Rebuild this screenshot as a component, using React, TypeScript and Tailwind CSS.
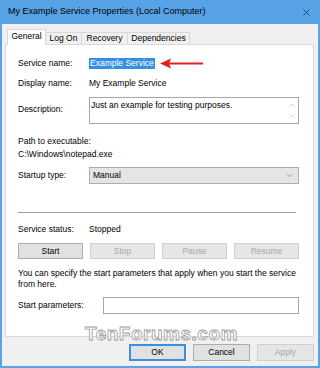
import { ChevronDown, ChevronUp, X } from "lucide-react";

const font = { fontFamily: '"Liberation Sans", Arial, sans-serif' };

function Btn({ label, disabled, wide }: { label: string; disabled?: boolean; wide?: boolean }) {
  return (
    <div
      className={`h-[16px] ${wide ? "w-[65px]" : "w-[57px]"} flex items-center justify-center border ${
        disabled ? "border-[#d0d0d0] bg-[#e6e6e6] text-[#a8a8a8]" : "border-[#adadad] bg-[#e1e1e1] text-black"
      }`}
    >
      {label}
    </div>
  );
}

export default function App() {
  return (
    <div
      className="relative w-[320px] h-[368px] bg-[#58a2e6] px-[2px] pb-[2px] flex flex-col text-[8.5px] text-black"
      style={font}
    >
      {/* title bar */}
      <div className="h-[24px] flex items-center justify-between pl-[6px] pr-[6px] text-[9px]">
        <span>My Example Service Properties (Local Computer)</span>
        <X size={11} strokeWidth={1.2} />
      </div>

      <div className="flex-1 bg-[#f0f0f0] flex flex-col pl-[3px]">
        {/* tabs */}
        <div className="flex items-end h-[20px] pl-[2px]">
          <div className="h-[16px] w-[39px] bg-white border border-b-0 border-[#d9d9d9] flex items-center justify-center relative top-[1px] z-10 pb-[2px]">
            General
          </div>
          <div className="h-[12px] w-[36px] border border-b-0 border-l-0 border-[#d9d9d9] flex items-center justify-center">
            Log On
          </div>
          <div className="h-[12px] w-[46px] border border-b-0 border-l-0 border-[#d9d9d9] flex items-center justify-center">
            Recovery
          </div>
          <div className="h-[12px] w-[62px] border border-b-0 border-l-0 border-[#d9d9d9] flex items-center justify-center">
            Dependencies
          </div>
        </div>

        {/* panel */}
        <div className="w-[309px] h-[293px] bg-white border border-[#d9d9d9] pl-[12px] pr-[14px] flex flex-col">
          <div className="mt-[12px] h-[13px] flex items-center">
            <span className="w-[71px]">Service name:</span>
            <span className="bg-[#3390e2] text-white h-[11px] px-[1px] flex items-center">Example Service</span>
            <svg width="44" height="11" viewBox="0 0 44 11" className="ml-[5px]">
              <path d="M9 4.5 H43 V6.5 H9 Z" fill="#e02020" />
              <path d="M0 5.5 L11 0.5 L9 5.5 L11 10.5 Z" fill="#e02020" />
            </svg>
          </div>

          <div className="mt-[7px] h-[13px] flex items-center">
            <span className="w-[71px]">Display name:</span>
            <span>My Example Service</span>
          </div>

          <div className="mt-[7px] flex">
            <span className="w-[71px] pt-[6px]">Description:</span>
            <div className="w-[210px] h-[27px] border border-[#a8a8a8] flex justify-between">
              <span className="pl-[1px] pt-[1px]">Just an example for testing purposes.</span>
              <div className="flex flex-col items-center justify-between py-[3px] pr-[2px] text-[#b0b0b0]">
                <ChevronUp size={8} strokeWidth={1.5} />
                <ChevronDown size={8} strokeWidth={1.5} />
              </div>
            </div>
          </div>

          <div className="mt-[11px] h-[13px] flex items-center">Path to executable:</div>
          <div className="h-[13px] flex items-center">C:\Windows\notepad.exe</div>

          <div className="mt-[6px] flex items-center">
            <span className="w-[71px]">Startup type:</span>
            <div className="w-[210px] h-[17px] border border-[#adadad] bg-[#e5e5e5] flex items-center justify-between pl-[3px] pr-[4px]">
              <span>Manual</span>
              <ChevronDown size={9} strokeWidth={1.3} className="text-[#444]" />
            </div>
          </div>

          <div className="mt-[28px] h-px bg-[#a0a0a0] w-[278px]" />

          <div className="mt-[10px] h-[13px] flex items-center">
            <span className="w-[71px]">Service status:</span>
            <span>Stopped</span>
          </div>

          <div className="mt-[7px] flex gap-[7px]">
            <Btn label="Start" wide />
            <Btn label="Stop" wide disabled />
            <Btn label="Pause" wide disabled />
            <Btn label="Resume" wide disabled />
          </div>

          <p className="mt-[9px] leading-[10.5px] w-[280px]">
            You can specify the start parameters that apply when you start the service from here.
          </p>

          <div className="mt-[8px] flex items-center">
            <span className="w-[85px]">Start parameters:</span>
            <div className="w-[196px] h-[17px] border border-[#a8a8a8]" />
          </div>
        </div>

        {/* dialog buttons */}
        <div className="mt-[7px] w-[309px] flex justify-end gap-[7px]">
          <div className="h-[17px] w-[57px] flex items-center justify-center border-2 border-[#3c8fd8] bg-[#e1e1e1]">OK</div>
          <div className="h-[17px] w-[57px] flex items-center justify-center border border-[#adadad] bg-[#e1e1e1]">Cancel</div>
          <div className="h-[17px] w-[57px] flex items-center justify-center border border-[#d0d0d0] bg-[#e6e6e6] text-[#a8a8a8]">Apply</div>
        </div>
      </div>

      {/* watermark */}
      <div className="absolute left-[85px] top-[320px] text-[19px] font-bold text-white [-webkit-text-stroke:0.8px_#9a9a9a] tracking-[0.5px]">
        TenForums.com
      </div>
    </div>
  );
}
